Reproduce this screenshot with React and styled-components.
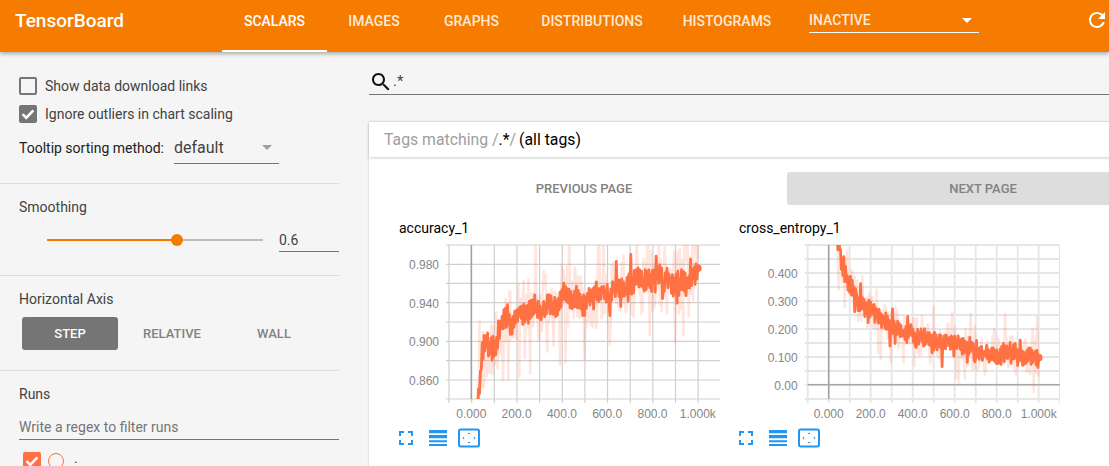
import React from "react";
import styled, { createGlobalStyle } from "styled-components";

const orange = "#f57c00";
const runColor = "#ff7043";
const blue = "#2196f3";

const GlobalStyle = createGlobalStyle`
  html, body {
    margin: 0;
    height: 100%;
    overflow: hidden;
    background: #f5f5f5;
    font-family: Roboto, "Liberation Sans", sans-serif;
  }
`;

const Page = styled.div`
  width: 1109px;
  height: 466px;
  overflow: hidden;
  display: flex;
  flex-direction: column;
`;

const Header = styled.header`
  position: relative;
  z-index: 2;
  flex: none;
  height: 52px;
  display: flex;
  background: ${orange};
  color: white;
  box-shadow: 0 2px 4px rgba(0, 0, 0, 0.3);
`;

const Title = styled.div`
  width: 222px;
  padding: 0 0 12px 15px;
  box-sizing: border-box;
  display: flex;
  align-items: center;
  font-size: 19px;
  font-weight: 500;
`;

const Tab = styled.div`
  box-sizing: border-box;
  height: 52px;
  width: ${(p) => p.$width}px;
  display: flex;
  align-items: center;
  justify-content: center;
  padding-bottom: 8px;
  font-size: 14px;
  font-weight: 500;
  color: ${(p) => (p.$active ? "#fff" : "rgba(255,255,255,0.85)")};
  border-bottom: 2px solid ${(p) => (p.$active ? "#fff" : "transparent")};
`;

const RunSelect = styled.div`
  box-sizing: border-box;
  width: 170px;
  height: 24px;
  margin: 9px 0 0 17px;
  display: flex;
  align-items: center;
  justify-content: space-between;
  padding: 0 7px 1px 0;
  font-size: 14px;
  font-weight: 500;
  color: rgba(255, 255, 255, 0.85);
  border-bottom: 1px solid #fff;
`;

const Caret = styled.span`
  width: 0;
  height: 0;
  border-left: 5px solid transparent;
  border-right: 5px solid transparent;
  border-top: 5px solid ${(p) => p.$color};
`;

const ReloadIcon = styled.svg`
  margin: 8px 0 0 106px;
  width: 24px;
  height: 24px;
  fill: #fff;
`;

const Body = styled.div`
  flex: 1;
  min-height: 0;
  display: flex;
`;

const Sidebar = styled.aside`
  flex: none;
  width: 339px;
`;

const Section = styled.section`
  box-sizing: border-box;
  height: ${(p) => p.$height}px;
  padding: ${(p) => p.$pad || "0 0 0 19px"};
  border-bottom: 1px solid #ddd;
  &:last-child {
    border-bottom: 0;
  }
`;

const CheckRow = styled.label`
  display: flex;
  align-items: center;
  height: 18px;
  gap: 8px;
  margin-bottom: 10px;
  font-size: 14px;
  color: #424242;
`;

const Box = styled.span`
  box-sizing: border-box;
  flex: none;
  width: 18px;
  height: 18px;
  display: flex;
  align-items: center;
  justify-content: center;
  border-radius: 2px;
  border: 2px solid ${(p) => p.$color};
  background: ${(p) => (p.$checked ? p.$color : "transparent")};
`;

const CheckMark = styled.svg`
  width: 18px;
  height: 18px;
  flex: none;
  fill: none;
  stroke: #fff;
  stroke-width: 2.6;
`;

const SortRow = styled.div`
  display: flex;
  align-items: flex-start;
  margin-top: 14px;
  font-size: 14px;
  color: #212121;
`;

const SortLabel = styled.span`
  width: 155px;
  line-height: 18px;
  padding-top: 2px;
  box-sizing: border-box;
  height: 26px;
`;

const SortSelect = styled.div`
  box-sizing: border-box;
  width: 105px;
  height: 27px;
  display: flex;
  align-items: center;
  justify-content: space-between;
  padding: 0 7px 6px 0;
  font-size: 16px;
  color: #424242;
  border-bottom: 1px solid #757575;
`;

const SectionLabel = styled.div`
  font-size: 14px;
  line-height: 18px;
  color: #424242;
`;

const SliderRow = styled.div`
  display: flex;
  align-items: center;
  margin: 8px 0 0 28px;
  height: 28px;
`;

const Track = styled.div`
  position: relative;
  width: 216px;
  height: 2px;
  margin-top: 4px;
  background: #bdbdbd;
`;

const TrackFill = styled.div`
  height: 2px;
  background: ${orange};
`;

const Thumb = styled.span`
  position: absolute;
  top: -5px;
  width: 12px;
  height: 12px;
  margin-left: -6px;
  border-radius: 50%;
  background: ${orange};
`;

const SliderValue = styled.div`
  box-sizing: border-box;
  width: 60px;
  height: 28px;
  margin-left: 16px;
  padding-top: 8px;
  font-size: 14px;
  color: #424242;
  border-bottom: 1px solid #757575;
`;

const AxisButtons = styled.div`
  display: flex;
  gap: 6px;
  margin: 9px 0 0 3px;
`;

const AxisButton = styled.div`
  width: 96px;
  height: 33px;
  display: flex;
  align-items: center;
  justify-content: center;
  border-radius: 3px;
  font-size: 13px;
  font-weight: 500;
  color: ${(p) => (p.$active ? "#fff" : "#828282")};
  background: ${(p) => (p.$active ? "#757575" : "transparent")};
`;

const RegexInput = styled.div`
  box-sizing: border-box;
  width: 320px;
  height: 27px;
  margin-top: 10px;
  padding-top: 6px;
  font-size: 14px;
  color: #757575;
  border-bottom: 1px solid #757575;
`;

const RunRow = styled.div`
  display: flex;
  align-items: flex-start;
  margin: 12px 0 0 4px;
  font-size: 14px;
  color: #424242;
`;

const RunRing = styled.span`
  box-sizing: border-box;
  width: 16px;
  height: 16px;
  margin: 1px 0 0 7px;
  border-radius: 50%;
  border: 1.5px solid ${runColor};
`;

const RunName = styled.span`
  margin-left: 10px;
  line-height: 12px;
`;

const Main = styled.main`
  flex: 1;
  min-width: 0;
  padding: 18px 0 0 30px;
  overflow: hidden;
`;

const SearchRow = styled.div`
  box-sizing: border-box;
  height: 25px;
  display: flex;
  align-items: flex-start;
  margin-bottom: 27px;
  border-bottom: 1px solid #757575;
  font-size: 15px;
  color: #424242;
`;

const SearchIcon = styled.svg`
  flex: none;
  width: 24px;
  height: 24px;
  fill: #111;
`;

const SearchText = styled.span`
  line-height: 22px;
`;

const Card = styled.div`
  width: 830px;
  height: 350px;
  background: #fff;
  box-shadow: 0 0 2px rgba(0, 0, 0, 0.2);
`;

const TagHeader = styled.div`
  box-sizing: border-box;
  height: 35px;
  padding: 0 0 0 15px;
  display: flex;
  align-items: center;
  gap: 3px;
  font-size: 15.8px;
  color: #000;
  box-shadow: 0 1px 3px rgba(0, 0, 0, 0.2);
`;

const Muted = styled.span`
  color: #9e9e9e;
`;

const Pager = styled.div`
  display: grid;
  grid-template-columns: 392px 392px;
  gap: 7px;
  padding: 15px 0 0 19px;
`;

const PageButton = styled.div`
  height: 33px;
  display: flex;
  align-items: center;
  justify-content: center;
  border-radius: 3px;
  font-size: 13px;
  font-weight: 500;
  color: #828282;
  background: ${(p) => (p.$disabled ? "#ddd" : "transparent")};
`;

const Tiles = styled.div`
  display: grid;
  grid-template-columns: 340px 340px;
  padding: 14px 0 0 11px;
`;

const Tile = styled.div`
  width: 340px;
`;

const TileTitle = styled.div`
  padding-left: 19px;
  font-size: 14px;
  line-height: 18px;
  color: #000;
`;

const ChartSvg = styled.svg`
  display: block;
  width: 340px;
  height: 184px;
  margin-top: 2px;
  font-family: "Liberation Sans", Arial, sans-serif;
  font-size: 12px;
  fill: #858585;
`;

const TileActions = styled.div`
  display: flex;
  align-items: center;
  gap: 7.5px;
  padding: 3px 0 0 14px;
`;

const ActionIcon = styled.svg`
  width: 24px;
  height: 24px;
  fill: ${blue};
`;

// seeded noise so the curves come out the same on every load
const makeRandom = (seed) => {
  let s = seed;
  return () => {
    s = (s * 16807) % 2147483647;
    return (s - 1) / 2147483646;
  };
};

const interp = (keys, x) => {
  for (let i = 1; i < keys.length; i++) {
    if (x <= keys[i][0]) {
      const [x0, y0] = keys[i - 1];
      const [x1, y1] = keys[i];
      return y0 + ((y1 - y0) * (x - x0)) / (x1 - x0);
    }
  }
  return keys[keys.length - 1][1];
};

const buildSeries = ({ keys, seed, lineNoise, rawNoise }) => {
  const rand = makeRandom(seed);
  const smooth = [];
  const raw = [];
  let drift = 0;
  for (let x = 0; x <= 1000; x += 4) {
    const base = interp(keys, x);
    drift = drift * 0.7 + (rand() - 0.5) * lineNoise * 0.35;
    const spike = rand() > 0.88 ? (rand() - 0.5) * lineNoise * 1.8 : 0;
    const flip = x % 8 === 0 ? 1 : -1;
    smooth.push([x, base + drift + spike + flip * lineNoise * 0.55 * (0.3 + rand() * 0.7)]);
    const kick = rand() > 0.8 ? 2 : 1;
    raw.push([x, base + (rand() - 0.5) * rawNoise * kick]);
  }
  // the run ends on a known value, where the end dot sits
  smooth[smooth.length - 1][1] = keys[keys.length - 1][1];
  return { smooth, raw };
};

const charts = [
  {
    name: "accuracy_1",
    left: 69,
    stepX: 22.65,
    zeroX: 91.3,
    vLines: 13,
    y: (v) => 25.3 + (0.98 - v) * 964,
    hLines: [6, 25.3, 44.3, 63.7, 83, 102.3, 121.7, 141, 160],
    yTicks: ["0.980", "0.940", "0.900", "0.860"].map((t) => [t, parseFloat(t)]),
    labelEnd: 59,
    grid: "#cfcfcf",
    gridWidth: 1.2,
    series: buildSeries({
      seed: 4711,
      lineNoise: 0.022,
      rawNoise: 0.075,
      keys: [
        [0, 0.74], [30, 0.84], [50, 0.885], [70, 0.895], [100, 0.892], [130, 0.915],
        [200, 0.922], [300, 0.935], [400, 0.945], [500, 0.945], [600, 0.952],
        [700, 0.96], [800, 0.967], [900, 0.96], [1000, 0.976],
      ],
    }),
  },
  {
    name: "cross_entropy_1",
    left: 87.7,
    stepX: 21,
    zeroX: 108.7,
    vLines: 13,
    y: (v) => 145.7 - v * 279,
    hLines: [6, 20, 34, 48, 62, 76, 90, 104, 118, 132, 145.7, 160],
    yTicks: ["0.400", "0.300", "0.200", "0.100", "0.00"].map((t) => [t, parseFloat(t)]),
    labelEnd: 77.7,
    grid: "#e6e6e6",
    gridWidth: 1.8,
    zeroH: true,
    series: buildSeries({
      seed: 90210,
      lineNoise: 0.06,
      rawNoise: 0.15,
      keys: [
        [0, 0.95], [40, 0.52], [60, 0.43], [100, 0.36], [150, 0.28], [200, 0.27],
        [250, 0.23], [300, 0.21], [400, 0.175], [500, 0.17], [600, 0.145],
        [700, 0.12], [800, 0.105], [900, 0.12], [1000, 0.097],
      ],
    }),
  },
];

const xTicks = ["0.000", "200.0", "400.0", "600.0", "800.0", "1.000k"];

const Chart = ({ chart, id }) => {
  const { left, stepX, zeroX, vLines, y, hLines, yTicks, labelEnd, grid, gridWidth, series } = chart;
  const right = 340;
  const toX = (step) => zeroX + (step / 200) * (stepX * 2);
  const toPoints = (pts) => pts.map(([a, b]) => `${toX(a).toFixed(1)},${y(b).toFixed(1)}`).join(" ");
  const last = series.smooth[series.smooth.length - 1];
  return (
    <ChartSvg viewBox="0 0 340 184">
      <clipPath id={id}>
        <rect x={left} y="6" width={right - left} height="154" />
      </clipPath>
      {hLines.map((h) => (
        <line key={h} x1={left - 3} x2={right} y1={h} y2={h} stroke={grid} strokeWidth={gridWidth} />
      ))}
      {Array.from({ length: vLines }, (_, i) => left + i * stepX).map((v) => (
        <line key={v} x1={v} x2={v} y1="6" y2="164" stroke={grid} strokeWidth={gridWidth} />
      ))}
      <line x1={zeroX} x2={zeroX} y1="6" y2="160" stroke="#a0a0a0" strokeWidth="1.5" />
      {chart.zeroH && <line x1={left} x2={right} y1={y(0)} y2={y(0)} stroke="#a6a6a6" strokeWidth="1.5" />}
      <g clipPath={`url(#${id})`}>
        <polyline points={toPoints(series.raw)} fill="none" stroke={runColor} strokeOpacity="0.18" strokeWidth="2.4" />
        <polyline points={toPoints(series.smooth)} fill="none" stroke={runColor} strokeWidth="2.8" strokeLinejoin="round" />
      </g>
      <circle cx={toX(last[0])} cy={y(last[1])} r="3.8" fill={runColor} />
      {yTicks.map(([label, value]) => (
        <text key={label} x={labelEnd} y={y(value) + 5} textAnchor="end">
          {label}
        </text>
      ))}
      {xTicks.map((label, i) => (
        <text key={label} x={toX(i * 200)} y="179" textAnchor="middle">
          {label}
        </text>
      ))}
    </ChartSvg>
  );
};

const ChartActions = () => (
  <TileActions>
    <ActionIcon viewBox="0 0 24 24">
      <path d="M7 14H5v5h5v-2H7v-3zm-2-4h2V7h3V5H5v5zm12 7h-3v2h5v-5h-2v3zM14 5v2h3v3h2V5h-5z" />
    </ActionIcon>
    <ActionIcon viewBox="0 0 24 24">
      <path d="M3 4h18v3.2H3zM3 9h18v3.2H3zM3 14.2h18v2H3zM3 18h18v2H3z" />
    </ActionIcon>
    <ActionIcon viewBox="0 0 24 24">
      <rect x="2" y="3.6" width="20" height="16.8" rx="1.6" fill="none" stroke={blue} strokeWidth="2" />
      <path d="M12 6.5l1.6 1.6h-3.2zM12 17.5l1.6-1.6h-3.2zM5.5 12l1.6-1.6v3.2zM18.5 12l-1.6-1.6v3.2z" />
    </ActionIcon>
  </TileActions>
);

const Check = () => (
  <CheckMark viewBox="0 0 18 18">
    <path d="M3.6 9.2l3.6 3.6 7.2-7.4" />
  </CheckMark>
);

const App = () => (
  <Page>
    <GlobalStyle />
    <Header>
      <Title>TensorBoard</Title>
      <Tab $active $width={105}>SCALARS</Tab>
      <Tab $width={94}>IMAGES</Tab>
      <Tab $width={101}>GRAPHS</Tab>
      <Tab $width={140}>DISTRIBUTIONS</Tab>
      <Tab $width={130}>HISTOGRAMS</Tab>
      <RunSelect>
        INACTIVE
        <Caret $color="#fff" />
      </RunSelect>
      <ReloadIcon viewBox="0 0 24 24">
        <path d="M17.65 6.35C16.2 4.9 14.21 4 12 4c-4.42 0-7.99 3.58-7.99 8s3.57 8 7.99 8c3.73 0 6.84-2.55 7.73-6h-2.08c-.82 2.33-3.04 4-5.65 4-3.31 0-6-2.69-6-6s2.69-6 6-6c1.66 0 3.14.69 4.22 1.78L13 11h7V4l-2.35 2.35z" />
      </ReloadIcon>
    </Header>
    <Body>
      <Sidebar>
        <Section $height={132} $pad="25px 0 0 19px">
          <CheckRow>
            <Box $color="#757575" />
            Show data download links
          </CheckRow>
          <CheckRow>
            <Box $color="#757575" $checked>
              <Check />
            </Box>
            Ignore outliers in chart scaling
          </CheckRow>
          <SortRow>
            <SortLabel>Tooltip sorting method:</SortLabel>
            <SortSelect>
              default
              <Caret $color="#9e9e9e" />
            </SortSelect>
          </SortRow>
        </Section>
        <Section $height={92} $pad="14px 0 0 19px">
          <SectionLabel>Smoothing</SectionLabel>
          <SliderRow>
            <Track>
              <TrackFill style={{ width: "60%" }} />
              <Thumb style={{ left: "60%" }} />
            </Track>
            <SliderValue>0.6</SliderValue>
          </SliderRow>
        </Section>
        <Section $height={95} $pad="14px 0 0 19px">
          <SectionLabel>Horizontal Axis</SectionLabel>
          <AxisButtons>
            <AxisButton $active>STEP</AxisButton>
            <AxisButton>RELATIVE</AxisButton>
            <AxisButton>WALL</AxisButton>
          </AxisButtons>
        </Section>
        <Section $height={95} $pad="14px 0 0 19px">
          <SectionLabel>Runs</SectionLabel>
          <RegexInput>Write a regex to filter runs</RegexInput>
          <RunRow>
            <Box $color={runColor} $checked>
              <Check />
            </Box>
            <RunRing />
            <RunName>.</RunName>
          </RunRow>
        </Section>
      </Sidebar>
      <Main>
        <SearchRow>
          <SearchIcon viewBox="0 0 24 24">
            <path d="M15.5 14h-.79l-.28-.27C15.41 12.59 16 11.11 16 9.5 16 5.91 13.09 3 9.5 3S3 5.91 3 9.5 5.91 16 9.5 16c1.61 0 3.09-.59 4.23-1.57l.27.28v.79l5 4.99L20.49 19l-4.99-5zm-6 0C7.01 14 5 11.99 5 9.5S7.01 5 9.5 5 14 7.01 14 9.5 11.99 14 9.5 14z" />
          </SearchIcon>
          <SearchText>.*</SearchText>
        </SearchRow>
        <Card>
          <TagHeader>
            <span>
              <Muted>Tags matching /</Muted>.*<Muted>/</Muted>
            </span>
            <span>(all tags)</span>
          </TagHeader>
          <Pager>
            <PageButton>PREVIOUS PAGE</PageButton>
            <PageButton $disabled>NEXT PAGE</PageButton>
          </Pager>
          <Tiles>
            {charts.map((chart, i) => (
              <Tile key={chart.name}>
                <TileTitle>{chart.name}</TileTitle>
                <Chart chart={chart} id={`plot-${i}`} />
                <ChartActions />
              </Tile>
            ))}
          </Tiles>
        </Card>
      </Main>
    </Body>
  </Page>
);

export default App;
